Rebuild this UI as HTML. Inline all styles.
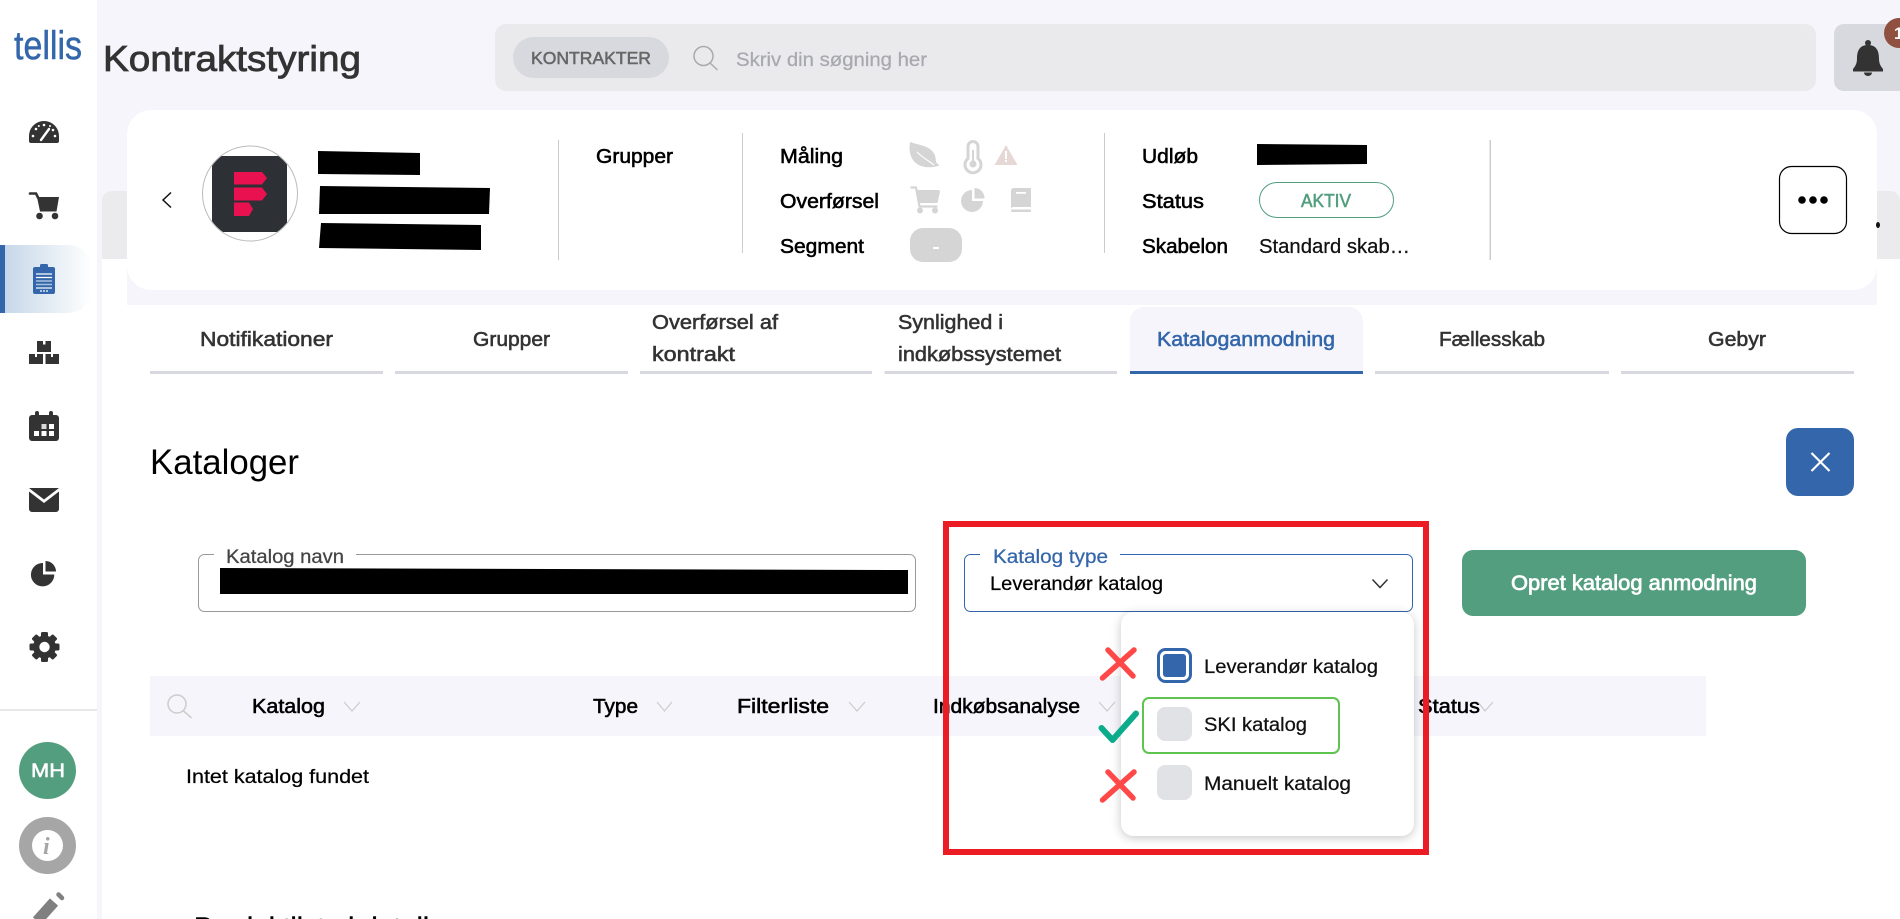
<!DOCTYPE html>
<html lang="da">
<head>
<meta charset="utf-8">
<title>Kontraktstyring</title>
<style>
html,body{margin:0;padding:0;background:#fff;width:1900px;height:919px;overflow:hidden}
svg{display:block}
text{font-family:"Liberation Sans",sans-serif;white-space:pre}
.m{stroke-width:.55}
.s{stroke-width:.25}
.k{fill:#000;stroke:#000}
.d{fill:#333;stroke:#333}
</style>
</head>
<body>
<svg xmlns="http://www.w3.org/2000/svg" width="1900" height="919" viewBox="0 0 1900 919">
<defs>
<linearGradient id="act" x1="0" x2="1" y1="0" y2="0"><stop offset="0" stop-color="#c3d5e7"/><stop offset="1" stop-color="#ffffff"/></linearGradient>
<clipPath id="av"><circle cx="250" cy="193.5" r="47"/></clipPath>
<filter id="sh" x="-20%" y="-20%" width="140%" height="140%"><feDropShadow dx="0" dy="2" stdDeviation="5" flood-color="#000" flood-opacity=".22"/></filter>
</defs>

<!-- backgrounds -->
<rect width="1900" height="919" fill="#fff"/>
<rect x="97" y="0" width="1803" height="259" fill="#f5f5fb"/>
<rect x="97" y="0" width="5" height="919" fill="#f5f5fb"/>
<rect x="127" y="259" width="1750" height="46" fill="#f5f5fb"/>
<path d="M102 259V201a10 10 0 0 1 10-10H130V259Z" fill="#ebebed"/>
<path d="M1870 191H1890a10 10 0 0 1 10 10V259H1870Z" fill="#ebebed"/>

<!-- sidebar -->
<text x="14" y="59" font-size="40" fill="#3366aa" stroke="#3366aa" stroke-width=".5" textLength="68" lengthAdjust="spacingAndGlyphs">tellis</text>

<!-- gauge -->
<path d="M31 143a2 2 0 0 1-2-2v-5a15 15 0 0 1 30 0v5a2 2 0 0 1-2 2Z" fill="#333"/>
<g fill="#fff"><circle cx="33" cy="136" r="1.3"/><circle cx="36" cy="129" r="1.3"/><circle cx="44" cy="125" r="1.3"/><circle cx="38.8" cy="126" r="1"/><circle cx="50" cy="126" r="1"/><circle cx="55" cy="136" r="1.3"/><circle cx="53" cy="130" r="1.3"/></g>
<path d="M41 140L49 129" stroke="#fff" stroke-width="2.4" stroke-linecap="round"/>

<!-- cart -->
<path d="M30 193.500h6l2 4" stroke="#333" stroke-width="2.6" fill="none" stroke-linecap="round"/>
<path d="M37 197H59L56.500 211.500H40Z" fill="#333"/>
<circle cx="39.500" cy="216" r="3.300" fill="#333"/><circle cx="55" cy="216" r="3.300" fill="#333"/>

<!-- active -->
<path d="M0 245H68a24 24 0 0 1 24 24v20a24 24 0 0 1-24 24H0Z" fill="url(#act)"/>
<rect x="0" y="245" width="5" height="68" fill="#3366aa"/>
<rect x="33" y="267" width="22" height="27" rx="2" fill="#3366aa"/>
<rect x="40" y="264" width="8" height="5" rx="1.500" fill="#3366aa"/>
<g stroke="#fff" stroke-width="1.200"><path d="M36 274H52M36 277.500H52"/><path d="M36 281H52M36 284.500H52" stroke="#a9c0dc" stroke-width="1.500"/><path d="M36 288H52"/><path d="M40 291h8" stroke-dasharray="2 1"/></g>

<!-- boxes -->
<path d="M37 341h14v11H37ZM29 354h14v10H29ZM45.500 354H59v10H45.500Z" fill="#333"/>
<path d="M43 341h2.500v3.500H43ZM35 354h2v3h-2ZM51 354h2v3h-2Z" fill="#fff"/>

<!-- calendar -->
<rect x="29" y="415" width="30" height="26" rx="3" fill="#333"/>
<rect x="35" y="411" width="4" height="7" rx="2" fill="#333"/><rect x="49" y="411" width="4" height="7" rx="2" fill="#333"/>
<g fill="#fff"><rect x="49" y="424" width="5" height="5"/><rect x="34" y="431" width="5" height="5"/><rect x="41.500" y="431" width="5" height="5"/><rect x="49" y="431" width="5" height="5"/></g>
<rect x="41.500" y="424" width="5" height="5" fill="#d9d9d9"/>

<!-- mail -->
<path d="M29 488H59L44 499.500Z" fill="#333"/>
<path d="M29 491.500L44 503L59 491.500V509a3 3 0 0 1-3 3H32a3 3 0 0 1-3-3Z" fill="#333"/>

<!-- pie -->
<path d="M43 563V574.500H54.300A11.700 11.700 0 1 1 43 563Z" fill="#333"/>
<path d="M45.500 561A10.500 10.500 0 0 1 56 571.500H45.500Z" fill="#333"/>

<!-- gear -->
<g fill="#333" transform="translate(44.500 647)">
<circle r="11.500"/>
<rect x="-3.500" y="-15" width="7" height="30" rx="1.500"/>
<rect x="-3.500" y="-15" width="7" height="30" rx="1.500" transform="rotate(45)"/>
<rect x="-3.500" y="-15" width="7" height="30" rx="1.500" transform="rotate(90)"/>
<rect x="-3.500" y="-15" width="7" height="30" rx="1.500" transform="rotate(135)"/>
<circle r="5.200" fill="#fff"/>
</g>

<rect x="0" y="709" width="97" height="2" fill="#e8e8ea"/>
<circle cx="47.500" cy="770.500" r="28.500" fill="#529e7e"/>
<text x="31" y="777" font-size="19" fill="#fff" stroke="#fff" class="m" textLength="34" lengthAdjust="spacingAndGlyphs">MH</text>
<circle cx="47.500" cy="845.500" r="28.500" fill="#a6a6a6"/>
<circle cx="47.500" cy="845.500" r="15.500" fill="#fff"/>
<text x="43" y="854" font-size="24" font-weight="700" font-style="italic" fill="#a6a6a6" style="font-family:'Liberation Serif',serif">i</text>
<path d="M54 902L37 921" stroke="#808080" stroke-width="11"/>
<path d="M58.500 894.500L62 898" stroke="#808080" stroke-width="4.500" stroke-linecap="round"/>

<!-- header -->
<text x="103" y="71" font-size="36" class="d" stroke-width=".8" textLength="258" lengthAdjust="spacingAndGlyphs">Kontraktstyring</text>
<rect x="495" y="24" width="1321" height="67" rx="11" fill="#eaeaec"/>
<rect x="513" y="37" width="156" height="41" rx="20.500" fill="#d8d9de"/>
<text x="531" y="64" font-size="17.500" fill="#666" stroke="#666" class="m" textLength="120" lengthAdjust="spacingAndGlyphs">KONTRAKTER</text>
<circle cx="703.500" cy="56" r="9.500" fill="none" stroke="#aaa" stroke-width="1.500"/>
<path d="M710 63L717.500 70" stroke="#aaa" stroke-width="1.500"/>
<text x="736" y="66" font-size="19" fill="#a8a8b0" stroke="#a8a8b0" class="s" textLength="191" lengthAdjust="spacingAndGlyphs">Skriv din søgning her</text>

<path d="M1844 24H1900V91H1844a10 10 0 0 1-10-10V34a10 10 0 0 1 10-10Z" fill="#d8d9de"/>
<circle cx="1868" cy="43" r="3" fill="#333"/>
<path d="M1868 45c-8.500 0-11 6-11 13.500c0 5.500-2 8-4 10.500v2.500h30V69c-2-2.500-4-5-4-10.500C1879 51 1876.500 45 1868 45Z" fill="#333"/>
<path d="M1864 72.500h8a4 3.500 0 0 1-8 0Z" fill="#333"/>
<circle cx="1899" cy="33" r="15" fill="#8f5040"/>
<text x="1894" y="39" font-size="17" font-weight="700" fill="#fff">1</text>

<!-- card -->
<rect x="127" y="110" width="1750" height="180" rx="24" fill="#fff"/>
<ellipse cx="1878" cy="225" rx="2" ry="3" fill="#111"/>
<path d="M171 192.500L163 200L171 207.500" fill="none" stroke="#111" stroke-width="1.500"/>
<circle cx="250" cy="193.500" r="47.500" fill="#fff" stroke="#bbb" stroke-width="1"/>
<rect x="212" y="156" width="75" height="76" fill="#2d3035" clip-path="url(#av)"/>
<g fill="#e9114f">
<path d="M234 172H262L267 178L262 184.500H234Z"/>
<path d="M234 187.500H262L267 194L262 200.500H234Z"/>
<path d="M234 202.500H249L253 209L249 216H234Z"/>
</g>
<g fill="#000">
<path d="M318 151L420 153V175L318 174Z"/>
<path d="M320 186L490 188L489 214H319Z"/>
<path d="M321 223L481 225V250L319 248Z"/>
<path d="M1257 144L1367 145V164L1257 165Z"/>
</g>
<g fill="#ccc">
<rect x="558" y="140" width="1" height="120"/>
<rect x="742" y="133" width="1" height="120"/>
<rect x="1104" y="133" width="1" height="120"/>
<rect x="1489.500" y="140" width="1.500" height="120"/>
</g>

<text x="596" y="163" font-size="20" class="m k" textLength="77" lengthAdjust="spacingAndGlyphs">Grupper</text>
<text x="780" y="163" font-size="20" class="m k" textLength="63" lengthAdjust="spacingAndGlyphs">Måling</text>
<text x="780" y="208" font-size="20" class="m k" textLength="99" lengthAdjust="spacingAndGlyphs">Overførsel</text>
<text x="780" y="253" font-size="20" class="m k" textLength="84" lengthAdjust="spacingAndGlyphs">Segment</text>
<text x="1142" y="163" font-size="20" class="m k" textLength="56" lengthAdjust="spacingAndGlyphs">Udløb</text>
<text x="1142" y="208" font-size="20" class="m k" textLength="62" lengthAdjust="spacingAndGlyphs">Status</text>
<text x="1142" y="253" font-size="20" class="m k" textLength="86" lengthAdjust="spacingAndGlyphs">Skabelon</text>
<text x="1259" y="253" font-size="20" fill="#111" stroke="#111" class="s" textLength="151" lengthAdjust="spacingAndGlyphs">Standard skab…</text>

<!-- status icons -->
<g fill="#d5d5d5">
<path d="M910 142C922 146 936 146 936 162L939.500 165.500L936 166.500C920 170 907 162 910 142Z"/>
<path d="M917 152C923 158 929 161 934 165" stroke="#fff" stroke-width="1.200" fill="none"/>
<path d="M973 141.500a5 5 0 0 1 5 5v12a8 8 0 1 1-10 0v-12a5 5 0 0 1 5-5Z" fill="none" stroke="#d5d5d5" stroke-width="3"/>
<circle cx="973" cy="164" r="3.500"/><rect x="972" y="150" width="2" height="12"/>
<path d="M916 190h22a2 2 0 0 1 2 2l-2.500 11H919Z"/>
<path d="M910.500 187.500h5.500l3.500 19h18" fill="none" stroke="#d5d5d5" stroke-width="2.200"/>
<circle cx="920" cy="210.500" r="3"/><circle cx="935" cy="210.500" r="3"/>
<path d="M972 190V201H983A11 11 0 1 1 972 190Z"/>
<path d="M974.500 188A10 10 0 0 1 984.500 198.500H974.500Z"/>
<path d="M1011 190.500a2.500 2.500 0 0 1 2.500-2.500H1031V207H1014a3 3 0 0 0-3 2Z"/>
<rect x="1011" y="209.500" width="20" height="2.500" rx="1"/>
<rect x="1016" y="192" width="10" height="1.800" fill="#fff"/>
<rect x="910" y="228" width="52" height="34" rx="13"/>
</g>
<path d="M1006 145L1017.500 165H994.500Z" fill="#e6d8d5"/>
<rect x="1005" y="151" width="2" height="8" fill="#fff"/><rect x="1005" y="160" width="2" height="2" fill="#fff"/>
<rect x="933" y="247" width="6" height="2" fill="#fff"/>

<rect x="1259.500" y="182.500" width="134" height="35" rx="17.500" fill="#fff" stroke="#529e7e" stroke-width="1"/>
<text x="1301" y="207" font-size="18" fill="#529e7e" stroke="#529e7e" class="m" textLength="50" lengthAdjust="spacingAndGlyphs">AKTIV</text>

<rect x="1779.500" y="166.500" width="67" height="67" rx="12" fill="#fff" stroke="#000" stroke-width="1.200"/>
<circle cx="1802" cy="200" r="3.800"/><circle cx="1813" cy="200" r="3.800"/><circle cx="1824" cy="200" r="3.800"/>

<!-- tabs -->
<path d="M1130 374V321a14 14 0 0 1 14-14H1349a14 14 0 0 1 14 14V374Z" fill="#f5f5fb"/>
<g fill="#d8d8e0">
<rect x="150" y="371" width="233" height="3"/>
<rect x="395" y="371" width="233" height="3"/>
<rect x="640" y="371" width="232" height="3"/>
<rect x="884.500" y="371" width="232.500" height="3"/>
<rect x="1375" y="371" width="234" height="3"/>
<rect x="1621" y="371" width="233" height="3"/>
</g>
<rect x="1130" y="371" width="233" height="3" fill="#3366aa"/>
<text x="200" y="346" font-size="20" class="m d" textLength="133" lengthAdjust="spacingAndGlyphs">Notifikationer</text>
<text x="473" y="346" font-size="20" class="m d" textLength="77" lengthAdjust="spacingAndGlyphs">Grupper</text>
<text x="652" y="329" font-size="20" class="m d" textLength="126" lengthAdjust="spacingAndGlyphs">Overførsel af</text>
<text x="652" y="361" font-size="20" class="m d" textLength="83" lengthAdjust="spacingAndGlyphs">kontrakt</text>
<text x="898" y="329" font-size="20" class="m d" textLength="105" lengthAdjust="spacingAndGlyphs">Synlighed i</text>
<text x="898" y="361" font-size="20" class="m d" textLength="163" lengthAdjust="spacingAndGlyphs">indkøbssystemet</text>
<text x="1157" y="346" font-size="20" fill="#3366aa" stroke="#3366aa" class="m" textLength="178" lengthAdjust="spacingAndGlyphs">Kataloganmodning</text>
<text x="1439" y="346" font-size="20" class="m d" textLength="106" lengthAdjust="spacingAndGlyphs">Fællesskab</text>
<text x="1708" y="346" font-size="20" class="m d" textLength="58" lengthAdjust="spacingAndGlyphs">Gebyr</text>

<!-- Kataloger -->
<text x="150" y="474" font-size="35" fill="#000" textLength="149" lengthAdjust="spacingAndGlyphs">Kataloger</text>
<rect x="1786" y="428" width="68" height="68" rx="12" fill="#3366aa"/>
<path d="M1811.500 453L1829.500 471M1829.500 453L1811.500 471" stroke="#fff" stroke-width="2.200"/>

<!-- fields -->
<rect x="198.500" y="554.500" width="717" height="57" rx="6" fill="#fff" stroke="#999" stroke-width="1"/>
<rect x="214" y="550" width="142" height="10" fill="#fff"/>
<text x="226" y="563" font-size="19" fill="#444" stroke="#444" class="s" textLength="118" lengthAdjust="spacingAndGlyphs">Katalog navn</text>
<path d="M220 568L908 570V594H220Z" fill="#000"/>

<!-- table -->
<rect x="150" y="676" width="1556" height="60" fill="#f5f5fb"/>
<circle cx="177" cy="704" r="9" fill="none" stroke="#ccc" stroke-width="1.500"/>
<path d="M183.500 711L191.500 718" stroke="#ccc" stroke-width="1.500"/>
<g class="m k" font-size="20">
<text x="252" y="713" textLength="73" lengthAdjust="spacingAndGlyphs">Katalog</text>
<text x="593" y="713" textLength="45" lengthAdjust="spacingAndGlyphs">Type</text>
<text x="737" y="713" textLength="92" lengthAdjust="spacingAndGlyphs">Filterliste</text>
<text x="933" y="713" textLength="147" lengthAdjust="spacingAndGlyphs">Indkøbsanalyse</text>
<text x="1418" y="713" textLength="62" lengthAdjust="spacingAndGlyphs">Status</text>
</g>
<g fill="none" stroke="#ccc" stroke-width="1.200">
<path d="M344 702L352 711L360 702"/>
<path d="M657 702L664.500 711L672 702"/>
<path d="M849 702L857 711L865 702"/>
<path d="M1099 702L1107 711L1115 702"/>
<path d="M1478 702L1485 711L1493 702"/>
</g>
<text x="186" y="783" font-size="19.500" fill="#000" stroke="#000" class="s" textLength="183" lengthAdjust="spacingAndGlyphs">Intet katalog fundet</text>
<text x="194" y="940" font-size="32" class="m k" textLength="260" lengthAdjust="spacingAndGlyphs">Produktliste i detaljer</text>

<!-- katalog type field -->
<rect x="964.500" y="554.500" width="448" height="57" rx="6" fill="#fff" stroke="#3366aa" stroke-width="1"/>
<rect x="980" y="550" width="140" height="10" fill="#fff"/>
<text x="993" y="563" font-size="19" fill="#3366aa" stroke="#3366aa" class="s" textLength="115" lengthAdjust="spacingAndGlyphs">Katalog type</text>
<text x="990" y="590" font-size="19.500" fill="#000" stroke="#000" class="s" textLength="173" lengthAdjust="spacingAndGlyphs">Leverandør katalog</text>
<path d="M1372.500 579.500L1380 587.500L1387.500 579.500" fill="none" stroke="#333" stroke-width="1.500"/>

<rect x="1121" y="612" width="293" height="224" rx="13" fill="#fff" filter="url(#sh)"/>
<rect x="1158.500" y="649.500" width="32" height="32" rx="7" fill="#fff" stroke="#3366aa" stroke-width="3"/>
<rect x="1163" y="654" width="23" height="23" rx="3" fill="#3366aa"/>
<text x="1204" y="673" font-size="19.500" fill="#111" stroke="#111" class="s" textLength="174" lengthAdjust="spacingAndGlyphs">Leverandør katalog</text>
<rect x="1143" y="698" width="196" height="55" rx="6" fill="#fff" stroke="#5fc34f" stroke-width="2"/>
<rect x="1157" y="707" width="35" height="34" rx="8" fill="#e1e2e6"/>
<text x="1204" y="731" font-size="19.500" fill="#111" stroke="#111" class="s" textLength="103" lengthAdjust="spacingAndGlyphs">SKI katalog</text>
<rect x="1157" y="765" width="35" height="35" rx="8" fill="#e1e2e6"/>
<text x="1204" y="790" font-size="19.500" fill="#111" stroke="#111" class="s" textLength="147" lengthAdjust="spacingAndGlyphs">Manuelt katalog</text>

<!-- Opret -->
<rect x="1462" y="550" width="344" height="66" rx="11" fill="#529e7e"/>
<text x="1511" y="590" font-size="21" fill="#fff" stroke="#fff" stroke-width=".7" textLength="246" lengthAdjust="spacingAndGlyphs">Opret katalog anmodning</text>

<!-- annotation -->
<rect x="946" y="524" width="480" height="328" fill="none" stroke="#ec1c24" stroke-width="6"/>
<g fill="none" stroke="#ff4848" stroke-width="5.500" stroke-linecap="round">
<path d="M1102.500 678L1134 650M1108 650L1133 676"/>
<path d="M1102.500 800L1134 772M1108 772L1133 798"/>
</g>
<path d="M1101.500 728L1112.500 740L1136 713.500" fill="none" stroke="#0bab8c" stroke-width="6" stroke-linecap="round" stroke-linejoin="round"/>
</svg>
</body>
</html>
